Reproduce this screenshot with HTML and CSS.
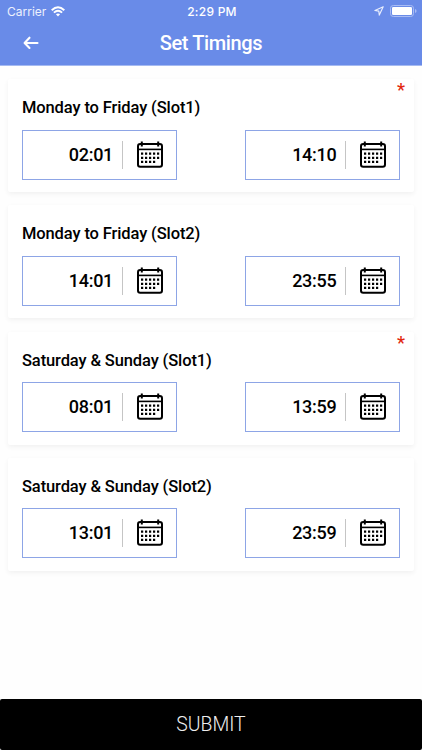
FILE: index.html
```html
<!DOCTYPE html>
<html lang="en">
<head>
<meta charset="utf-8">
<title>Set Timings</title>
<link rel="stylesheet" href="styles.css">
</head>
<body>
<svg class="defs" aria-hidden="true">
  <symbol id="calendar" viewBox="0 0 26 27">
    <rect x="1" y="3" width="24" height="22.7" rx="2.2" fill="none" stroke="#000" stroke-width="2"/>
    <path d="M1 8.4h24" stroke="#000" stroke-width="1.6"/>
    <path d="M4.8 .6v5M21.2 .6v5" stroke="#000" stroke-width="2"/>
    <path d="M4 12.7h18.2M4 16.8h18.2M4 20.9h14.2" stroke="#000" stroke-width="2.3" stroke-dasharray="2.2 1.8"/>
  </symbol>
</svg>
<div class="screen">
  <header class="header">
    <div class="status">
      <div class="carrier"><span>Carrier</span>
        <svg width="14" height="11" viewBox="0 0 14 11" fill="none" stroke="#fff" stroke-width="1.9"><path d="M.7 4.3Q7-1.8 13.3 4.3M2.9 6.6q4.1-3.8 8.2 0"/><path d="M7 10.5L4.9 8.3q2.1-1.8 4.2 0z" fill="#fff" stroke="none"/></svg>
      </div>
      <span class="clock">2:29 PM</span>
      <div class="indicators">
        <svg width="10" height="10" viewBox="0 0 10 10" fill="none" stroke="#e9eefd" stroke-width="1.15" stroke-linejoin="round"><path d="M9.2.8L.9 4.5l3.9.6.5 4z"/></svg>
        <svg width="27" height="12" viewBox="0 0 27 12"><rect x=".5" y=".5" width="23" height="11" rx="2.8" fill="none" stroke="#a9bcf4"/><rect x="2" y="2" width="20" height="8" rx="1.3" fill="#fff"/><path d="M25 4q1.6.4 1.6 2T25 8z" fill="#a9bcf4"/></svg>
      </div>
    </div>
    <div class="nav">
      <svg class="back" width="16" height="14" viewBox="0 0 16 14" fill="none" stroke="#fff" stroke-width="2.1" stroke-linecap="round" stroke-linejoin="round"><path d="M14.5 7H2M6.5 1.7L1.6 7l4.9 5"/></svg>
      <h1>Set Timings</h1>
    </div>
  </header>
  <main class="slots">
    <section class="card">
      <span class="required">*</span>
      <h2>Monday to Friday (Slot1)</h2>
      <div class="times">
        <div class="field"><span>02:01</span><svg><use href="#calendar"/></svg></div>
        <div class="field"><span>14:10</span><svg><use href="#calendar"/></svg></div>
      </div>
    </section>
    <section class="card">
      <h2>Monday to Friday (Slot2)</h2>
      <div class="times">
        <div class="field"><span>14:01</span><svg><use href="#calendar"/></svg></div>
        <div class="field"><span>23:55</span><svg><use href="#calendar"/></svg></div>
      </div>
    </section>
    <section class="card">
      <span class="required">*</span>
      <h2>Saturday &amp; Sunday (Slot1)</h2>
      <div class="times">
        <div class="field"><span>08:01</span><svg><use href="#calendar"/></svg></div>
        <div class="field"><span>13:59</span><svg><use href="#calendar"/></svg></div>
      </div>
    </section>
    <section class="card">
      <h2>Saturday &amp; Sunday (Slot2)</h2>
      <div class="times">
        <div class="field"><span>13:01</span><svg><use href="#calendar"/></svg></div>
        <div class="field"><span>23:59</span><svg><use href="#calendar"/></svg></div>
      </div>
    </section>
  </main>
  <button class="submit">SUBMIT</button>
</div>
</body>
</html>
```
FILE: styles.css
```css
* { box-sizing: border-box; }
body { margin: 0; background: #fefefe; font-family: Roboto, "Liberation Sans", sans-serif; color: #000; }
.defs { position: absolute; width: 0; height: 0; }
.screen { width: 422px; height: 750px; display: flex; flex-direction: column; overflow: hidden; }
.header { height: 66px; flex: none; background: #698be8; color: #fff; border-bottom: 1px solid #a5baf1; }
.status { height: 22px; display: grid; grid-template-columns: 1fr auto 1fr; align-items: center; padding: 0 5px 0 7px; font-family: Inter, sans-serif; font-size: 12px; }
.carrier { display: flex; align-items: center; gap: 5px; color: #edf1fd; }
.clock { font-weight: 500; letter-spacing: .25px; }
.indicators { display: flex; justify-content: flex-end; align-items: center; gap: 6px; }
.nav { height: 42px; display: grid; grid-template-columns: 60px 1fr 60px; align-items: center; }
.back { margin-left: 23px; }
h1 { margin: 0; text-align: center; font-size: 20px; line-height: 24px; font-weight: 500; letter-spacing: -.38px; }
.slots { flex: 1; padding: 13px 8px 0; display: flex; flex-direction: column; gap: 13.3px; }
.card { position: relative; height: 113px; flex: none; padding: 18px 13.7px 0 14px; background: #fff; border-radius: 2px; box-shadow: 0 2px 5px rgba(0,0,0,.055); }
h2 { margin: 0; height: 20px; font-size: 16.5px; line-height: 21px; font-weight: 500; letter-spacing: -.12px; white-space: nowrap; }
.required { position: absolute; right: 9px; top: -1px; color: #e22910; font-size: 18px; line-height: 24px; font-weight: 500; }
.times { margin-top: 12.5px; display: flex; justify-content: space-between; }
.field { width: 155px; height: 50px; border: 1px solid #8da5e6; display: flex; align-items: center; justify-content: flex-end; padding-right: 13px; }
.field span { height: 28px; padding-right: 9px; border-right: 1px solid #c5c5c5; font-size: 18px; line-height: 28px; font-weight: 500; letter-spacing: -.3px; }
.field svg { width: 26px; height: 27px; margin-left: 14px; margin-top: -1px; }
.submit { flex: none; width: 100%; height: 51px; border: 0; border-radius: 2px; padding: 0; background: #000; color: #eee; font: 300 19.4px/51px Roboto, sans-serif; }
```
